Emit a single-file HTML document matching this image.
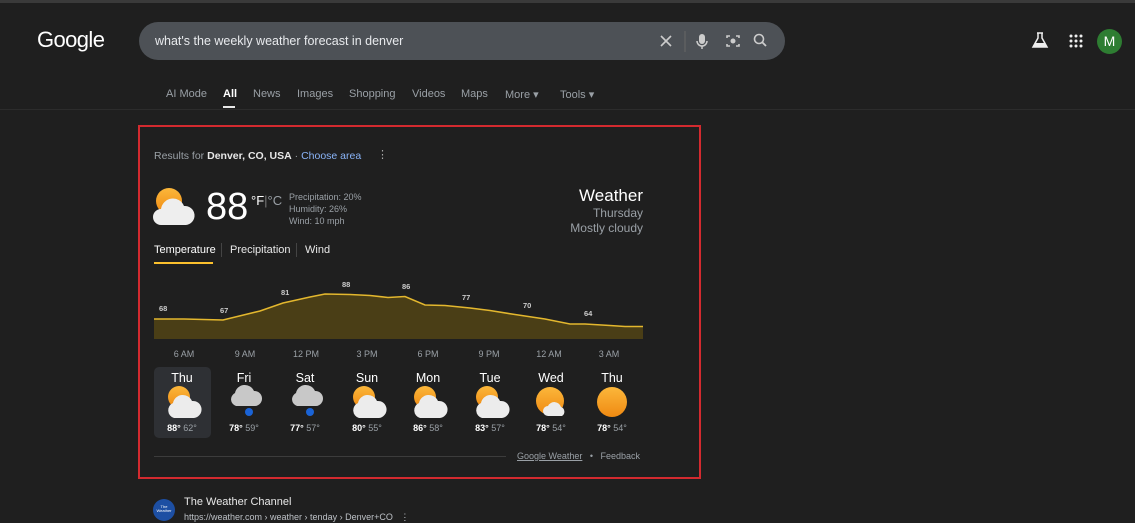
<!DOCTYPE html>
<html><head><meta charset="utf-8"><style>
*{margin:0;padding:0;box-sizing:border-box}
body{width:1135px;height:522px;background:#1f1f1f;font-family:"Liberation Sans",Arial,sans-serif;color:#e8e8e8;position:relative;overflow:hidden}
.a{position:absolute;white-space:nowrap}
</style></head><body>
<div class="a" style="left:0;top:0;width:1135px;height:3px;background:#3a3a3a"></div>
<div class="a" style="left:37px;top:27px;font-size:22px;color:#fff;letter-spacing:-0.6px">Google</div>
<div class="a" style="left:139px;top:22px;width:646px;height:38px;border-radius:19px;background:#4d5156"></div>
<div class="a" style="left:155px;top:34px;font-size:12.5px;color:#e8eaed">what's the weekly weather forecast in denver</div>
<svg class="a" style="left:650px;top:26px" width="130" height="30" viewBox="0 0 130 30">
<path d="M11 10l10 10M21 10l-10 10" stroke="#ccc" stroke-width="1.6"/>
<line x1="35" y1="5" x2="35" y2="26" stroke="#666"/>
<rect x="49" y="8" width="6" height="10" rx="3" fill="#ccc"/><path d="M47 15a5 5 0 0 0 10 0M52 20v3" stroke="#ccc" stroke-width="1.5" fill="none"/>
<path d="M77 12v-2h3M86 10h3v2M89 18v2h-3M80 20h-3v-2" stroke="#ccc" stroke-width="1.6" fill="none"/><circle cx="83" cy="15" r="2.5" fill="#ccc"/>
<circle cx="109" cy="13" r="4.5" stroke="#ccc" stroke-width="1.6" fill="none"/><path d="M112 16l4 4" stroke="#ccc" stroke-width="1.8"/>
</svg>
<svg class="a" style="left:1030px;top:30px" width="20" height="20"><path d="M7 3h6M8 3v5L3 17h14L12 8V3" stroke="#eee" stroke-width="1.5" fill="none"/><path d="M5 13h10l2 4H3z" fill="#eee"/></svg>
<svg class="a" style="left:1069px;top:34px" width="14" height="14"><g fill="#eee"><circle cx="2" cy="2" r="1.5"/><circle cx="7" cy="2" r="1.5"/><circle cx="12" cy="2" r="1.5"/><circle cx="2" cy="7" r="1.5"/><circle cx="7" cy="7" r="1.5"/><circle cx="12" cy="7" r="1.5"/><circle cx="2" cy="12" r="1.5"/><circle cx="7" cy="12" r="1.5"/><circle cx="12" cy="12" r="1.5"/></g></svg>
<div class="a" style="left:1097px;top:29px;width:25px;height:25px;border-radius:50%;background:#2e7d32;color:#fff;font-size:14px;text-align:center;line-height:25px">M</div>
<div class="a" style="top:88px;left:0;font-size:11px;color:#9aa0a6">
<span class="a" style="left:166px">AI Mode</span><span class="a" style="left:223px;color:#fff;font-weight:bold">All</span><span class="a" style="left:253px">News</span><span class="a" style="left:297px">Images</span><span class="a" style="left:349px">Shopping</span><span class="a" style="left:412px">Videos</span><span class="a" style="left:461px">Maps</span><span class="a" style="left:505px">More ▾</span><span class="a" style="left:560px">Tools ▾</span></div>
<div class="a" style="left:223px;top:106px;width:12px;height:2px;background:#e8e8e8"></div>
<div class="a" style="left:0;top:109px;width:1135px;height:1px;background:#2c2c2c"></div>
<div class="a" style="left:138px;top:125px;width:563px;height:354px;border:2px solid #d32a2f"></div>
<div class="a" style="left:154px;top:150px;font-size:10.5px;color:#9aa0a6">Results for <b style="color:#e8e8e8">Denver, CO, USA</b> · <span style="color:#8ab4f8">Choose area</span></div>
<div class="a" style="left:377px;top:148px;font-size:11px;color:#aaa">⋮</div>
<svg class="a" style="left:153px;top:185px" width="48" height="42" viewBox="0 0 48 42">
<defs><linearGradient id="s" x1="0" y1="0" x2="0" y2="1"><stop offset="0" stop-color="#fbb73b"/><stop offset="1" stop-color="#f08a12"/></linearGradient></defs>
<circle cx="16" cy="16" r="13" fill="url(#s)"/><path d="M8 40a8 8 0 0 1 0-16a12 12 0 0 1 23-3a9 9 0 0 1 2 19z" fill="#eee"/></svg>
<div class="a" style="left:206px;top:186px;font-size:38px;color:#fff">88</div>
<div class="a" style="left:251px;top:193px;font-size:13px;color:#fff">°F<span style="color:#777">|</span><span style="color:#9aa0a6">°C</span></div>
<div class="a" style="left:289px;top:191px;font-size:9px;color:#9aa0a6;line-height:12px">Precipitation: 20%<br>Humidity: 26%<br>Wind: 10 mph</div>
<div class="a" style="right:492px;top:186px;font-size:17px;color:#fff;text-align:right">Weather</div>
<div class="a" style="right:492px;top:206px;font-size:12px;color:#9aa0a6;text-align:right;line-height:15px">Thursday<br>Mostly cloudy</div>
<div class="a" style="left:154px;top:244px;font-size:11px;color:#fff">Temperature</div>
<div class="a" style="left:154px;top:262px;width:59px;height:2px;background:#fbc02d"></div>
<div class="a" style="left:221px;top:243px;width:1px;height:14px;background:#444"></div>
<div class="a" style="left:230px;top:244px;font-size:11px;color:#e8e8e8">Precipitation</div>
<div class="a" style="left:296px;top:243px;width:1px;height:14px;background:#444"></div>
<div class="a" style="left:305px;top:244px;font-size:11px;color:#e8e8e8">Wind</div>
<svg class="a" style="left:0;top:0" width="700" height="360">
<path d="M154 319L184 319L223 320L260 311L283 303L310 297L325 294L350 294.5L370 295.5L388 297.5L405 296.5L425 305L445 305.5L470 308L490 310.5L515 314.5L545 319L570 324L585 324L610 325.5L625 326.5L643 326.5L643 339L154 339Z" fill="#4a3e16"/>
<path d="M154 319L184 319L223 320L260 311L283 303L310 297L325 294L350 294.5L370 295.5L388 297.5L405 296.5L425 305L445 305.5L470 308L490 310.5L515 314.5L545 319L570 324L585 324L610 325.5L625 326.5L643 326.5" fill="none" stroke="#e3b72e" stroke-width="1.6"/>
<g font-size="7.5" fill="#ccc" font-family="Liberation Sans" font-weight="bold"><text x="159" y="311">68</text><text x="220" y="313">67</text><text x="281" y="295">81</text><text x="342" y="287">88</text><text x="402" y="289">86</text><text x="462" y="300">77</text><text x="523" y="308">70</text><text x="584" y="316">64</text></g>
<g font-size="9" fill="#9aa0a6" font-family="Liberation Sans" text-anchor="middle"><text x="184" y="357">6 AM</text><text x="245" y="357">9 AM</text><text x="306" y="357">12 PM</text><text x="367" y="357">3 PM</text><text x="428" y="357">6 PM</text><text x="489" y="357">9 PM</text><text x="549" y="357">12 AM</text><text x="609" y="357">3 AM</text></g>
</svg>
<div class="a" style="left:154px;top:367px;width:57px;height:71px;border-radius:5px;background:#2e3034"></div>
<svg class="a" style="left:0;top:0" width="700" height="440">
<defs><linearGradient id="g" x1="0" y1="0" x2="0" y2="1"><stop offset="0" stop-color="#fbb73b"/><stop offset="1" stop-color="#f08a12"/></linearGradient>
<g id="pc"><circle cx="-4" cy="-6" r="11" fill="url(#g)"/><path d="M-9 15a8 8 0 0 1-1-15a10 10 0 0 1 19-2a8.5 8.5 0 0 1 2 17z" fill="#ececec"/></g>
<g id="rn"><path d="M-8 6a7 7 0 0 1-1-13a10 10 0 0 1 19-2a7 7 0 0 1 1 15z" fill="#c8c8c8"/><circle cx="5" cy="12" r="4" fill="#1a63d6"/></g>
<g id="ms"><circle cx="-1" cy="-1" r="14" fill="url(#g)"/><path d="M-3 14a5 5 0 0 1 0-10a7 7 0 0 1 13 1a5 5 0 0 1 1 9z" fill="#ececec"/></g>
<g id="su"><circle cx="0" cy="0" r="15" fill="url(#g)"/></g></defs>
<use href="#pc" x="183" y="403"/><use href="#rn" x="244" y="400"/><use href="#rn" x="305" y="400"/><use href="#pc" x="368" y="403"/><use href="#pc" x="429" y="403"/><use href="#pc" x="491" y="403"/><use href="#ms" x="551" y="402"/><use href="#su" x="612" y="402"/>
<g font-family="Liberation Sans" text-anchor="middle"><g font-size="12.5" fill="#fff"><text x="182" y="382">Thu</text><text x="244" y="382">Fri</text><text x="305" y="382">Sat</text><text x="367" y="382">Sun</text><text x="428" y="382">Mon</text><text x="490" y="382">Tue</text><text x="551" y="382">Wed</text><text x="612" y="382">Thu</text></g>
<g font-size="9" fill="#9aa0a6"><text x="182" y="431"><tspan fill="#fff" font-weight="bold">88°</tspan> 62°</text><text x="244" y="431"><tspan fill="#fff" font-weight="bold">78°</tspan> 59°</text><text x="305" y="431"><tspan fill="#fff" font-weight="bold">77°</tspan> 57°</text><text x="367" y="431"><tspan fill="#fff" font-weight="bold">80°</tspan> 55°</text><text x="428" y="431"><tspan fill="#fff" font-weight="bold">86°</tspan> 58°</text><text x="490" y="431"><tspan fill="#fff" font-weight="bold">83°</tspan> 57°</text><text x="551" y="431"><tspan fill="#fff" font-weight="bold">78°</tspan> 54°</text><text x="612" y="431"><tspan fill="#fff" font-weight="bold">78°</tspan> 54°</text></g></g>
</svg>
<div class="a" style="left:154px;top:456px;width:352px;height:1px;background:#3c3c3c"></div>
<div class="a" style="left:517px;top:451px;font-size:9px;color:#9aa0a6"><u>Google Weather</u> &nbsp; • &nbsp; Feedback</div>
<div class="a" style="left:153px;top:499px;width:22px;height:22px;border-radius:50%;background:#1d4fa3;color:#fff;font-size:4px;text-align:center;padding-top:6px;line-height:4px">The<br>Weather</div>
<div class="a" style="left:184px;top:496px;font-size:11px;color:#e8e8e8">The Weather Channel</div>
<div class="a" style="left:184px;top:512px;font-size:9px;color:#bdc1c6">https://weather.com › weather › tenday › Denver+CO &nbsp; ⋮</div>
</body></html>
